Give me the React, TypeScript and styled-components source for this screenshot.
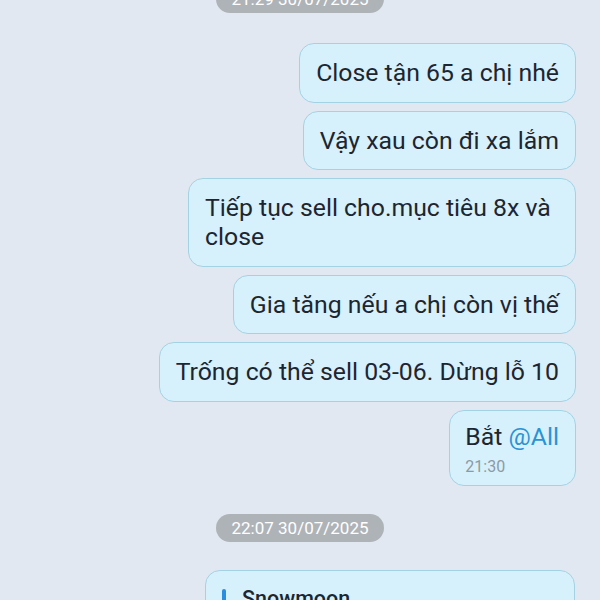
import React from "react";
import styled, { createGlobalStyle } from "styled-components";

const Global = createGlobalStyle`
  html, body { margin: 0; padding: 0; }
  body {
    background: #e2e8f1;
    font-family: Roboto, "Noto Sans", "Liberation Sans", sans-serif;
    overflow: hidden;
  }
`;

const Screen = styled.div`
  width: 600px;
  height: 600px;
  overflow: hidden;
  display: flex;
  flex-direction: column;
  align-items: flex-end;
  padding: 0 24px 0 0;
  box-sizing: border-box;
`;

const DatePill = styled.div<{ $top?: number; $bottom?: number }>`
  align-self: center;
  width: 168px;
  height: 28px;
  border-radius: 14px;
  background: #aeb3b8;
  color: #ffffff;
  font-size: 17px;
  line-height: 28px;
  text-align: center;
  margin-top: ${(p) => p.$top ?? 0}px;
  margin-bottom: ${(p) => p.$bottom ?? 0}px;
  transform: translateX(12px);
`;

const Bubble = styled.div<{ $gap?: number; $w?: number }>`
  box-sizing: border-box;
  max-width: 430px;
  ${(p) => (p.$w ? `width: ${p.$w}px;` : "")}
  background: #d6f1fc;
  border: 1px solid #a3d2e3;
  border-radius: 15px;
  padding: 14.25px 16px;
  color: #1d2630;
  font-size: 24.8px;
  line-height: 29px;
  margin-bottom: ${(p) => p.$gap ?? 8}px;
`;

const Mention = styled.span`
  color: #2a93d5;
`;

const Time = styled.div`
  color: #8d9aa4;
  font-size: 16px;
  line-height: 20px;
  margin-top: 6px;
`;

const StackedBubble = styled(Bubble)`
  padding: 11px 16px 8px 15px;
`;

const ReplyBubble = styled(Bubble)`
  width: 370px;
  max-width: none;
  padding: 15px 16px;
  margin-right: 1px;
`;

const Quote = styled.div`
  display: flex;
  gap: 16px;
  align-items: flex-start;
`;

const QuoteBar = styled.div`
  width: 4px;
  height: 40px;
  border-radius: 2px;
  background: #2a8ee0;
  margin-top: 3px;
`;

const QuoteName = styled.div`
  font-size: 21.5px;
  font-weight: 500;
  color: #1d2630;
  line-height: 26px;
`;

export default function App() {
  return (
    <>
      <Global />
      <Screen>
        <DatePill $top={-15} $bottom={30}>21:29 30/07/2025</DatePill>
        <Bubble>Close tận 65 a chị nhé</Bubble>
        <Bubble>Vậy xau còn đi xa lắm</Bubble>
        <Bubble $w={388}>Tiếp tục sell cho.mục tiêu 8x và close</Bubble>
        <Bubble>Gia tăng nếu a chị còn vị thế</Bubble>
        <Bubble>Trống có thể sell 03-06. Dừng lỗ 10</Bubble>
        <StackedBubble $gap={28}>
          <div>
            Bắt <Mention>@All</Mention>
          </div>
          <Time>21:30</Time>
        </StackedBubble>
        <DatePill $bottom={28}>22:07 30/07/2025</DatePill>
        <ReplyBubble>
          <Quote>
            <QuoteBar />
            <QuoteName>Snowmoon</QuoteName>
          </Quote>
        </ReplyBubble>
      </Screen>
    </>
  );
}
